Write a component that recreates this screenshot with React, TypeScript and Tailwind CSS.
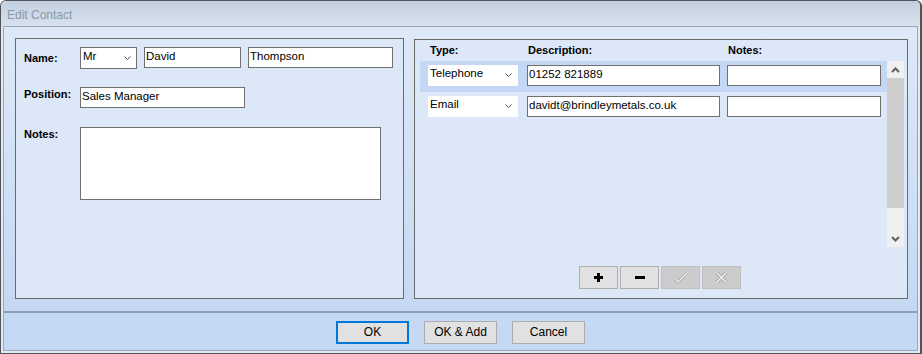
import React from "react";

const ui = "font-['Liberation_Sans',Arial,sans-serif]";

function TextBox({ className, value }: { className: string; value?: string }) {
  return (
    <div
      className={`h-[21px] shrink-0 border border-[#707070] bg-white pl-[1px] pt-[1px] text-[11.5px] leading-[15px] text-black whitespace-nowrap ${className}`}
    >
      {value}
    </div>
  );
}

function Chevron() {
  return (
    <svg width="7" height="4" viewBox="0 0 7 4" className="shrink-0">
      <path d="M0.5 0.5 L3.5 3.5 L6.5 0.5" fill="none" stroke="#555" strokeWidth="1" />
    </svg>
  );
}

function Combo({ value, bordered, className }: { value: string; bordered?: boolean; className: string }) {
  return (
    <div
      className={`flex shrink-0 items-start bg-white pl-[2px] text-[11.5px] leading-[15px] text-black ${
        bordered ? "border border-[#707070] pt-[1px]" : "pt-[1px]"
      } ${className}`}
    >
      <span className="flex-1">{value}</span>
      <span className={bordered ? "mt-[7px] mr-[5px]" : "mt-[7px] mr-[6px]"}>
        <Chevron />
      </span>
    </div>
  );
}

function Label({ text, className }: { text: string; className: string }) {
  return (
    <div className={`w-[56px] shrink-0 text-[11px] font-bold leading-[15px] text-black ${className}`}>
      {text}
    </div>
  );
}

function ContactRow({ type, value, active }: { type: string; value: string; active?: boolean }) {
  return (
    <div className={`flex h-[31px] items-start pl-[8px] pt-[4px] ${active ? "bg-[#c4d8f5]" : ""}`}>
      <Combo value={type} className="w-[90px] h-[21px]" />
      <TextBox className="ml-[9px] w-[193px]" value={value} />
      <TextBox className="ml-[7px] w-[154px]" />
    </div>
  );
}

function ScrollBar() {
  return (
    <div className="flex h-[186px] w-[17px] shrink-0 flex-col bg-[#f0f0f0]">
      <div className="flex h-[17px] items-center justify-center">
        <svg width="9" height="6" viewBox="0 0 9 6">
          <path d="M1 5 L4.5 1.5 L8 5" fill="none" stroke="#606060" strokeWidth="2" />
        </svg>
      </div>
      <div className="h-[130px] bg-[#cdcdcd]" />
      <div className="flex-1" />
      <div className="flex h-[17px] items-center justify-center">
        <svg width="9" height="6" viewBox="0 0 9 6">
          <path d="M1 1 L4.5 4.5 L8 1" fill="none" stroke="#606060" strokeWidth="2" />
        </svg>
      </div>
    </div>
  );
}

function ToolButton({ disabled, children }: { disabled?: boolean; children: React.ReactNode }) {
  return (
    <div
      className={`flex h-[23px] w-[39px] items-center justify-center border ${
        disabled ? "border-[#bfbfbf] bg-[#cccccc]" : "border-[#adadad] bg-[#e1e1e1]"
      }`}
    >
      {children}
    </div>
  );
}

function DialogButton({ label, primary }: { label: string; primary?: boolean }) {
  return (
    <div
      className={`flex h-[23px] w-[73px] items-center justify-center bg-[#e1e1e1] text-[12px] leading-[15px] text-black ${
        primary ? "border-2 border-[#0078d7]" : "border border-[#adadad]"
      }`}
    >
      {label}
    </div>
  );
}

export default function App() {
  return (
    <div
      className={`${ui} flex h-[354px] w-[922px] flex-col overflow-hidden rounded-t-[6px] border-t border-b border-l border-r-2 border-[#50545a] bg-[#e3eaf3]`}
    >
      <div className="h-[25px] shrink-0 bg-linear-to-b from-[#c2d0df] to-[#d8e2ed] pl-[6px] pt-[7px] text-[12px] leading-[15px] text-[#8a98a9]">
        Edit Contact
      </div>

      <div className="flex-1 px-[2px] pb-[2px]">
        <div className="flex h-full flex-col border border-[#9ba6b6]">
          <div className="flex h-[284px] shrink-0 items-start gap-[10px] bg-linear-to-b from-[#dee9f8] to-[#c5d8f3] pl-[11px] pt-[11px]">
            <div className="flex h-[261px] w-[389px] shrink-0 flex-col border border-[#6a6a6a] bg-[#dce7f8] pl-[8px] pt-[8px]">
              <div className="flex items-start">
                <Label text="Name:" className="pt-[4px]" />
                <Combo value="Mr" bordered className="w-[57px] h-[22px]" />
                <TextBox className="ml-[7px] w-[97px]" value="David" />
                <TextBox className="ml-[7px] w-[145px]" value="Thompson" />
              </div>
              <div className="mt-[18px] flex items-start">
                <Label text="Position:" className="" />
                <TextBox className="w-[165px]" value="Sales Manager" />
              </div>
              <div className="mt-[19px] flex items-start">
                <Label text="Notes:" className="" />
                <div className="h-[73px] w-[301px] border border-[#707070] bg-white" />
              </div>
            </div>

            <div className="mt-[1px] flex h-[260px] w-[494px] shrink-0 flex-col border border-[#6a6a6a] bg-[#dce7f8] pt-[3px]">
              <div className="ml-[15px] flex h-[15px] text-[11px] font-bold leading-[15px] text-black">
                <div className="w-[98px]">Type:</div>
                <div className="w-[200px]">Description:</div>
                <div>Notes:</div>
              </div>
              <div className="ml-[5px] mt-[3px] flex w-[484px]">
                <div className="w-[467px]">
                  <ContactRow type="Telephone" value="01252 821889" active />
                  <ContactRow type="Email" value="davidt@brindleymetals.co.uk" />
                </div>
                <ScrollBar />
              </div>
              <div className="mt-[19px] flex justify-center gap-[2px] pr-[2px]">
                <ToolButton>
                  <svg width="9" height="9" viewBox="0 0 9 9">
                    <rect x="3" y="0" width="3" height="9" fill="#000" />
                    <rect x="0" y="3" width="9" height="3" fill="#000" />
                  </svg>
                </ToolButton>
                <ToolButton>
                  <svg width="10" height="3" viewBox="0 0 10 3">
                    <rect x="0" y="0" width="10" height="3" fill="#000" />
                  </svg>
                </ToolButton>
                <ToolButton disabled>
                  <svg width="15" height="12" viewBox="0 0 15 12">
                    <path d="M1.5 6.5 L5 10 L13.5 1.5" fill="none" stroke="#a9a9a9" strokeWidth="3" strokeLinejoin="round" />
                    <path d="M1.5 6.5 L5 10 L13.5 1.5" fill="none" stroke="#f4f4f4" strokeWidth="1.2" />
                  </svg>
                </ToolButton>
                <ToolButton disabled>
                  <svg width="13" height="13" viewBox="0 0 13 13">
                    <path d="M1.5 1.5 L11.5 11.5 M11.5 1.5 L1.5 11.5" fill="none" stroke="#a9a9a9" strokeWidth="3.4" />
                    <path d="M1.5 1.5 L11.5 11.5 M11.5 1.5 L1.5 11.5" fill="none" stroke="#f4f4f4" strokeWidth="1.4" />
                  </svg>
                </ToolButton>
              </div>
            </div>
          </div>

          <div className="h-[2px] shrink-0 bg-[#8e9eb4]" />
          <div className="flex h-[37px] shrink-0 items-start justify-center gap-[15px] bg-[#c5d9f4] pt-[8px]">
            <DialogButton label="OK" primary />
            <DialogButton label="OK & Add" />
            <DialogButton label="Cancel" />
          </div>
        </div>
      </div>
    </div>
  );
}
